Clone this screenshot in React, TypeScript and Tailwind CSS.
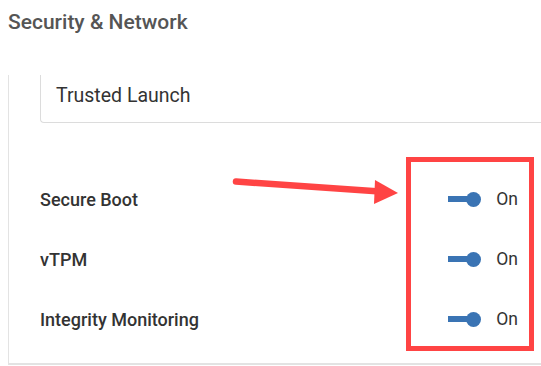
import React from "react";

function Toggle() {
  return (
    <div className="relative h-[15px] w-[33px]">
      <div className="absolute left-0 top-[4.5px] h-[6px] w-[28px] bg-[#3a74b4]" />
      <div className="absolute right-0 top-0 h-[15px] w-[15px] rounded-full bg-[#3a74b4]" />
    </div>
  );
}

function Row({ label }: { label: string }) {
  return (
    <div className="flex h-[60px] items-center justify-between pr-[23px]">
      <span className="text-[18px] font-medium text-[#333]">{label}</span>
      <div className="flex items-center gap-[15px]">
        <Toggle />
        <span className="text-[17.5px] text-[#333]">On</span>
      </div>
    </div>
  );
}

export default function App() {
  return (
    <div
      className="relative h-[366px] w-[541px] overflow-hidden bg-white"
      style={{ fontFamily: "Roboto, 'Liberation Sans', sans-serif" }}
    >
      <h2 className="pl-[8px] pt-[8px] text-[21px] font-medium leading-[28px] text-[#555]">
        Security &amp; Network
      </h2>
      <div className="ml-[8px] mt-[39px] border-b-2 border-l border-[#e3e3e3] pb-[14px] pl-[31px]">
        <div className="flex h-[48px] items-center rounded-bl-[4px] border-b border-l border-[#dcdcdc] pb-[6px] pl-[15px]">
          <span className="text-[19.5px] text-[#333]">Trusted Launch</span>
        </div>
        <div className="mt-[46px]">
          <Row label="Secure Boot" />
          <Row label="vTPM" />
          <Row label="Integrity Monitoring" />
        </div>
      </div>

      <div className="absolute left-[406px] top-[157px] h-[194px] w-[128px] border-[5px] border-[#ff4444]" />
      <svg className="absolute left-0 top-0" width="541" height="366">
        <line x1="236" y1="181.5" x2="380" y2="191.5" stroke="#ff4444" strokeWidth="6.5" strokeLinecap="round" />
        <polygon points="375,180 398,193 374,204" fill="#ff4444" />
      </svg>
    </div>
  );
}
